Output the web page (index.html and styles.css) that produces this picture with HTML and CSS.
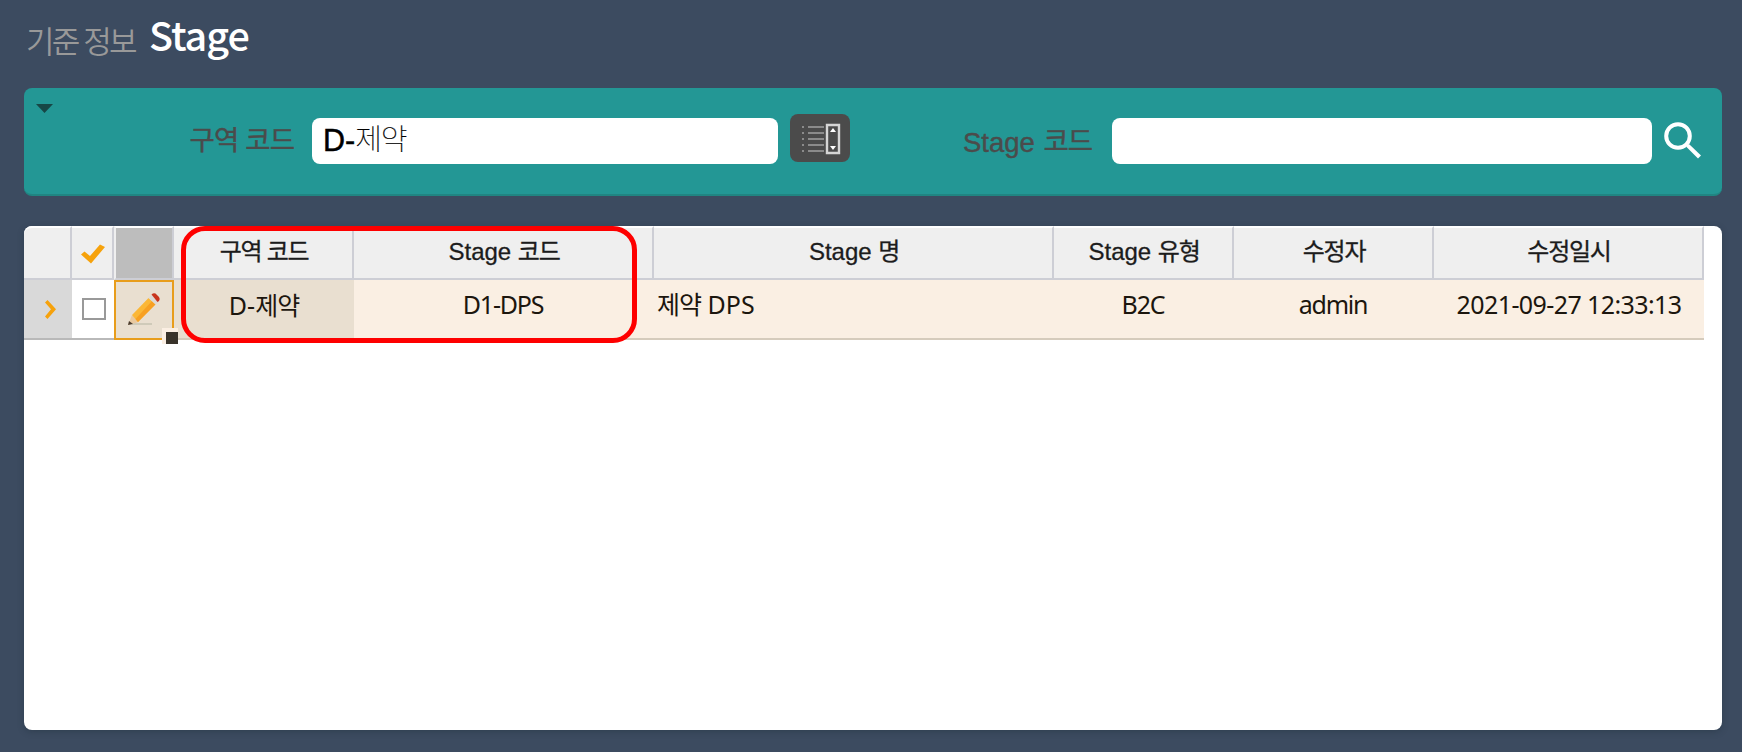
FILE: index.html
```html
<!DOCTYPE html>
<html lang="ko">
<head>
<meta charset="utf-8">
<title>Stage</title>
<link rel="stylesheet" href="styles.css">
</head>
<body>
<header class="title"><span class="crumb">기준 정보</span><h1 class="name">Stage</h1></header>
<section class="search">
  <svg class="caret" viewBox="0 0 17 9"><path d="M0 0H17L8.5 9Z" fill="#174746"/></svg>
  <label class="label area"><span class="ko">구역 코드</span></label>
  <div class="field first"><span class="latin">D-</span><span class="thin">제약</span></div>
  <button class="picker" type="button">
    <svg width="60" height="48" viewBox="0 0 60 48">
      <g fill="#8b8b8b"><path d="M12 12h2v2h-2zM12 18h2v2h-2zM12 24h2v2h-2zM12 30h2v2h-2zM12 36h2v2h-2zM18 12h16v2H18zM18 18h16v2H18zM18 24h16v2H18zM18 30h16v2H18zM18 36h16v2H18z"/></g>
      <path d="M37 11h12v28H37z" fill="none" stroke="#d5d5d5" stroke-width="2.4"/>
      <path d="M40 18l3-4 3 4zM40 32l3 4 3-4z" fill="#fff"/>
    </svg>
  </button>
  <label class="label stage">Stage <span class="ko">코드</span></label>
  <div class="field second"></div>
  <svg class="glass" width="38" height="38" viewBox="0 0 38 38"><circle cx="14" cy="14" r="11.8" fill="none" stroke="#fff" stroke-width="4"/><path d="M22.5 22.5h3L37 33.500l-3 3L22.500 25z" fill="#fff"/></svg>
</section>
<main class="grid">
  <div class="row head">
    <div class="cell"></div>
    <div class="cell mark"><svg class="check" width="24" height="20" viewBox="0 0 24 20"><path d="M0 10.500L3.500 7.500 9 12 19 .5 24 3 10 19.500Z" fill="#f6a20c"/></svg></div>
    <div class="cell gray"></div>
    <div class="cell"><span class="ko">구역 코드</span></div>
    <div class="cell">Stage&nbsp;<span class="ko">코드</span></div>
    <div class="cell">Stage&nbsp;<span class="ko">명</span></div>
    <div class="cell">Stage&nbsp;<span class="ko">유형</span></div>
    <div class="cell"><span class="ko">수정자</span></div>
    <div class="cell"><span class="ko">수정일시</span></div>
  </div>
  <div class="row data">
    <div class="cell marker"><svg class="chevron" width="11" height="19" viewBox="0 0 11 19"><path d="M0 2.500L2.500 0 11 9.200 2.500 19 0 16.500 6 9.200Z" fill="#f6a20c"/></svg></div>
    <div class="cell pick"><span class="box"></span></div>
    <div class="cell edit">
      <svg width="34" height="34" viewBox="0 0 34 34">
        <path d="M5 32H25" stroke="#cfcab9" stroke-width="2"/>
        <path d="M1 33L5 23 12 30Z" fill="#e9c9a0"/><path d="M1 33l1-4 4 3z" fill="#493b2e"/>
        <path d="M5 23L21.500 6 28.500 12 11 30Z" fill="#fbb736"/>
        <path d="M8.500 27L25 9l3.500 3.500L11 30Z" fill="#f7a022"/>
        <path d="M21.500 6l3-3 7 7-3 2.500z" fill="#dcd9d4"/>
        <path d="M24.500 2.500q2-2 4-1l3.500 3.500q1.500 2 0 4l-1.500 1z" fill="#c8341c"/>
      </svg>
      <span class="handle"></span>
    </div>
    <div class="cell zone">D-<span class="ko">제약</span></div>
    <div class="cell tight">D1-DPS</div>
    <div class="cell left"><span class="ko">제약</span>&nbsp;DPS</div>
    <div class="cell tight">B2C</div>
    <div class="cell tight">admin</div>
    <div class="cell date">2021-09-27 12:33:13</div>
  </div>
  <div class="highlight"></div>
</main>
</body>
</html>
```
FILE: styles.css
```css
* { box-sizing: border-box; }
body {
  margin: 0;
  padding: 0 20px 0 24px;
  width: 1742px;
  height: 752px;
  overflow: hidden;
  background: #3c4b60;
  font-family: "Liberation Sans", "Noto Sans CJK KR", sans-serif;
}
.title {
  display: flex;
  align-items: baseline;
  height: 88px;
  padding: 6px 0 0 2px;
  line-height: 56px;
}
.crumb {
  position: relative;
  top: 2px;
  width: 108px;
  font: 350 31px/56px "Noto Sans CJK KR", sans-serif;
  letter-spacing: -2.800px;
  white-space: nowrap;
  color: #999;
}
.name {
  margin: 0 0 0 15px;
  font: 500 39.5px/56px "Noto Sans CJK KR", sans-serif;
  letter-spacing: -1px;
  color: #fff;
}
.search {
  display: flex;
  align-items: flex-start;
  width: 1698px;
  height: 108px;
  border-radius: 8px;
  border-bottom: 2px solid #208582;
  background: #239795;
}
.caret { width: 17px; height: 9px; margin: 16px 0 0 11.5px; }
.label { font-size: 27.5px; line-height: 40px; color: #4b4b4b; white-space: nowrap; -webkit-text-stroke: .4px #4b4b4b; }
.label .ko { position: relative; top: -1px; left: 1px; letter-spacing: -1px; }
.area { width: 123.5px; margin: 34px 0 0 136px; }
.area .ko { letter-spacing: -.8px; }
.stage { width: 149px; margin: 35px 0 0 113px; }
.field {
  height: 46px;
  margin-top: 30px;
  border-radius: 8px;
  background: #fff;
  padding-left: 11px;
  font-size: 29px;
  line-height: 40px;
  color: #000;
}
.latin { font-size: 30.5px; -webkit-text-stroke: .5px #000; }
.thin { position: relative; top: -1px; font-family: "Noto Sans CJK KR", sans-serif; font-weight: 100; letter-spacing: -1px; -webkit-text-stroke: .2px #000; }
.first { width: 466px; }
.second { width: 540px; }
.picker { width: 60px; height: 48px; margin: 26px 0 0 12px; padding: 0; border: 0; border-radius: 8px; background: #4b4b4b; }
.picker svg { display: block; }
.glass { margin: 34px 0 0 12px; }
.grid {
  position: relative;
  width: 1698px;
  height: 504px;
  margin-top: 30px;
  border-radius: 8px;
  background: #fff;
  box-shadow: 0 2px 6px rgba(30, 45, 55, .35);
}
.row { display: grid; grid-template-columns: 48px 42px 60px 180px 300px 400px 180px 200px 270px; width: 1680px; }
.cell { display: flex; align-items: baseline; justify-content: center; white-space: pre; line-height: 40px; }
.head { height: 54px; font-size: 24px; color: #1c1c1c; }
.head .cell {
  padding: 4px 0 0 2px;
  border-top: 2px solid #fff;
  border-right: 2px solid #cdced5;
  border-bottom: 2px solid #cdced5;
  background: #efefef;
  -webkit-text-stroke: .3px #1c1c1c;
}
.head .cell:first-child { border-radius: 8px 0 0; }
.head .mark { align-items: center; padding: 1px 0 0 2px; }
.head .ko { letter-spacing: -1.250px; }
.head .gray { background: #bdbdbd; border-left: 2px solid #efefef; }
.data {
  height: 60px;
  font-family: "Noto Sans", "Noto Sans CJK KR", sans-serif;
  font-size: 25px;
  color: #1c160e;
}
.data .cell { padding-top: 4px; background: #faefe3; border-bottom: 2px solid #d5cbbc; }
.data .ko { letter-spacing: -1px; }
.data .tight { padding-right: 2px; letter-spacing: -1.200px; }
.data .date { letter-spacing: -.6px; }
.data .marker, .data .pick, .data .edit { align-items: center; }
.data .marker { padding: 0 0 0 4px; background: #d9d9d9; border-bottom-color: #b9b9b9; }
.data .pick { padding: 0 0 0 1px; background: #fff; border-bottom-color: #b9b9b9; }
.box { width: 24px; height: 22px; border: 2px solid #999; }
.data .edit { position: relative; padding: 0; background: #e9dfd0; border: 2px solid #e89d1b; }
.data .edit svg { margin-bottom: 3px; }
.handle {
  position: absolute;
  right: -6px;
  bottom: -6px;
  width: 16px;
  height: 16px;
  border: solid #fbefe3;
  border-width: 4px 0 0 4px;
  background: #39332a;
}
.data .zone { padding-top: 5px; background: #e9dfd0; }
.data .left { justify-content: flex-start; padding-left: 3px; }
.highlight {
  position: absolute;
  left: 157px;
  top: 0;
  width: 456px;
  height: 117px;
  border: 5px solid #fe0000;
  border-radius: 24px;
}
```
